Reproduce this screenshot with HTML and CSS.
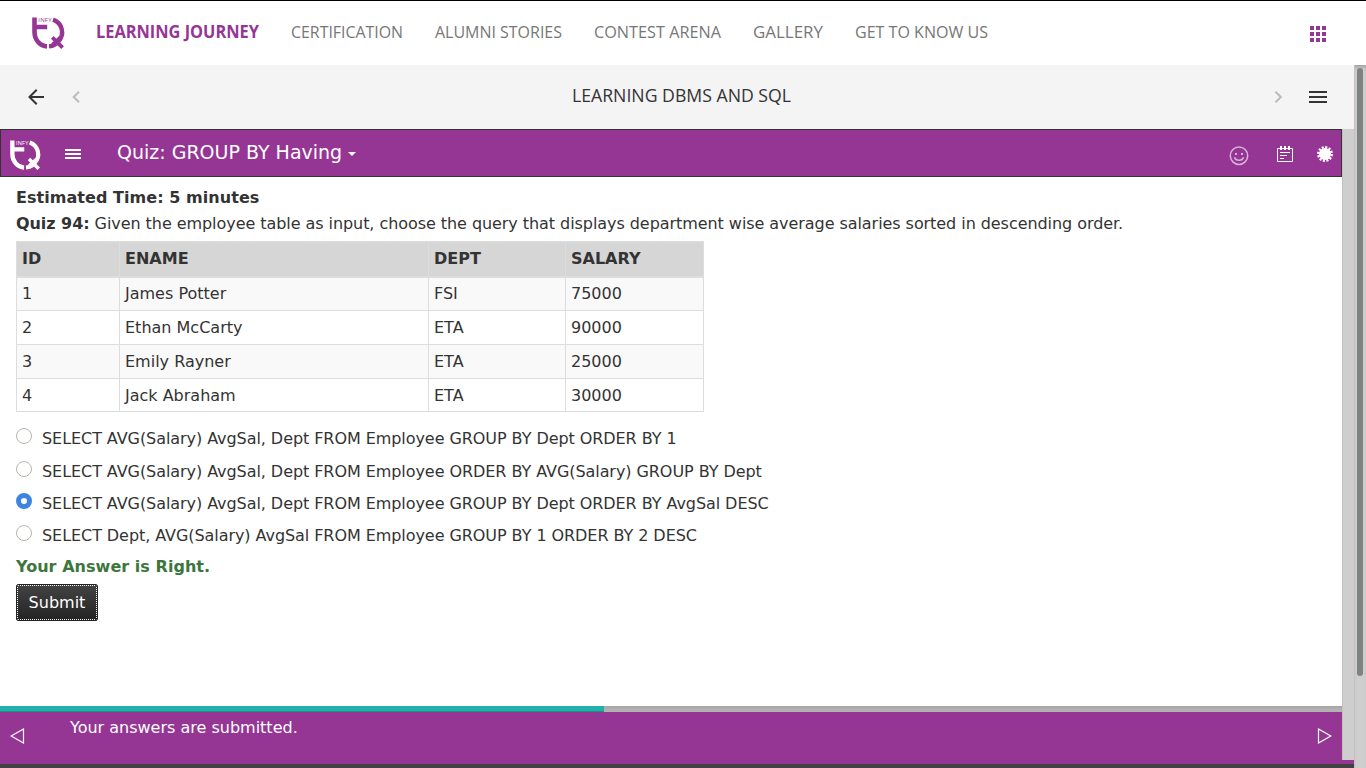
FILE: index.html
```html
<!DOCTYPE html>
<html lang="en">
<head>
<meta charset="utf-8">
<title>Learning DBMS and SQL</title>
<link rel="stylesheet" href="styles.css">
</head>
<body>
<header class="site-header">
  <svg class="logo" width="32" height="32" viewBox="0 0 32 32">
    <path d="M2.5 .5V15A13 14.4 0 0 0 15 29.4M2 10H15.2" fill="none" stroke="currentColor" stroke-width="4.6"/>
    <path d="M21 2.6A13.3 13.3 0 0 1 26.4 24.4M17 29.4C20 29.2 22.2 28.4 24.4 26.8" fill="none" stroke="currentColor" stroke-width="4.4"/>
    <path d="M20.3 20.3L30.6 30.6M20.6 27.6L28.2 20.6" fill="none" stroke="currentColor" stroke-width="3.8"/>
    <text class="logo-text" x="6.3" y="5.2" textLength="13.2">INFY</text>
  </svg>
  <nav class="nav">
    <svg class="link active" width="163" height="24"><text x="0" y="18" textLength="163" lengthAdjust="spacingAndGlyphs">LEARNING JOURNEY</text></svg>
    <svg class="link" width="112" height="24"><text x="0" y="18" textLength="112" lengthAdjust="spacingAndGlyphs">CERTIFICATION</text></svg>
    <svg class="link" width="127" height="24"><text x="0" y="18" textLength="127" lengthAdjust="spacingAndGlyphs">ALUMNI STORIES</text></svg>
    <svg class="link" width="127" height="24"><text x="0" y="18" textLength="127" lengthAdjust="spacingAndGlyphs">CONTEST ARENA</text></svg>
    <svg class="link" width="70" height="24"><text x="0" y="18" textLength="70" lengthAdjust="spacingAndGlyphs">GALLERY</text></svg>
    <svg class="link" width="133" height="24"><text x="0" y="18" textLength="133" lengthAdjust="spacingAndGlyphs">GET TO KNOW US</text></svg>
  </nav>
  <svg class="apps" width="16" height="16" fill="currentColor"><path d="M0 0h4v4H0zM6 0h4v4H6zM12 0h4v4h-4zM0 6h4v4H0zM6 6h4v4H6zM12 6h4v4h-4zM0 12h4v4H0zM6 12h4v4H6zM12 12h4v4h-4z"/></svg>
</header>
<div class="workspace">
  <main class="main">
    <div class="course-bar">
      <svg class="back" width="16" height="16" fill="none" stroke="#333" stroke-width="2"><path d="M16 8H1.5M8.7 .8L1.5 8L8.7 15.2"/></svg>
      <svg class="prev" width="8" height="12" fill="none" stroke="#bbb" stroke-width="2"><path d="M7 .8L1.7 6L7 11.2"/></svg>
      <svg class="course-title" width="219" height="26"><text x="0" y="19" textLength="219" lengthAdjust="spacingAndGlyphs">LEARNING DBMS AND SQL</text></svg>
      <svg class="next" width="8" height="12" fill="none" stroke="#bbb" stroke-width="2"><path d="M1.5 .8L6.8 6L1.5 11.2"/></svg>
      <svg class="menu" width="18" height="12" fill="#333"><path d="M0 0h18v2H0zM0 5h18v2H0zM0 10h18v2H0z"/></svg>
    </div>
    <div class="frame">
      <section class="player">
        <div class="quiz-bar">
          <svg class="quiz-logo" width="30" height="30" viewBox="0 0 32 32">
            <path d="M2.5 .5V15A13 14.4 0 0 0 15 29.4M2 10H15.2" fill="none" stroke="currentColor" stroke-width="4.6"/>
            <path d="M21 2.6A13.3 13.3 0 0 1 26.4 24.4M17 29.4C20 29.2 22.2 28.4 24.4 26.8" fill="none" stroke="currentColor" stroke-width="4.4"/>
            <path d="M20.3 20.3L30.6 30.6M20.6 27.6L28.2 20.6" fill="none" stroke="currentColor" stroke-width="3.8"/>
            <text class="logo-text" x="6.3" y="5.2" textLength="13.2">INFY</text>
          </svg>
          <svg class="quiz-menu" width="16" height="10" fill="#fff"><path d="M0 0h16v2H0zM0 4h16v2H0zM0 8h16v2H0z"/></svg>
          <span class="quiz-title">Quiz: GROUP BY Having</span>
          <svg class="caret" width="8" height="4" fill="#fff"><path d="M0 0h8L4 4z"/></svg>
          <svg class="smile" width="20" height="20" fill="none" stroke="#d8b4d8" stroke-width="1.5"><circle cx="10" cy="9.7" r="8.7"/><path d="M5.5 11.2C6.5 15.2 13.5 15.2 14.5 11.2"/><path d="M6 8h2M12 8h2" stroke-width="2"/></svg>
          <svg class="notes" width="16" height="16" fill="none" stroke="#fff"><path d="M.5 2.5h15v13H.5zM3 6.5h10M3 9.5h7M3 12.5h4"/><path d="M4 0v4M8 0v4M12 0v4" stroke-width="2"/></svg>
          <svg class="badge" width="16" height="16" viewBox="-8 -8 16 16"><circle r="6" fill="#fff"/><circle r="6.8" fill="none" stroke="#fff" stroke-width="2.4" stroke-dasharray="2.1 1.46"/></svg>
        </div>
        <div class="content">
          <p class="time">Estimated Time: 5 minutes</p>
          <p class="question"><b>Quiz 94:</b> Given the employee table as input, choose the query that displays department wise average salaries sorted in descending order.</p>
          <table class="data">
            <colgroup><col class="c-id"><col class="c-name"><col class="c-dept"><col class="c-salary"></colgroup>
            <thead><tr><th>ID</th><th>ENAME</th><th>DEPT</th><th>SALARY</th></tr></thead>
            <tbody>
              <tr><td>1</td><td>James Potter</td><td>FSI</td><td>75000</td></tr>
              <tr><td>2</td><td>Ethan McCarty</td><td>ETA</td><td>90000</td></tr>
              <tr><td>3</td><td>Emily Rayner</td><td>ETA</td><td>25000</td></tr>
              <tr class="last"><td>4</td><td>Jack Abraham</td><td>ETA</td><td>30000</td></tr>
            </tbody>
          </table>
          <div class="options">
            <label class="option first"><span class="radio"></span>SELECT AVG(Salary) AvgSal, Dept FROM Employee GROUP BY Dept ORDER BY 1</label>
            <label class="option"><span class="radio"></span>SELECT AVG(Salary) AvgSal, Dept FROM Employee ORDER BY AVG(Salary) GROUP BY Dept</label>
            <label class="option"><span class="radio checked"></span>SELECT AVG(Salary) AvgSal, Dept FROM Employee GROUP BY Dept ORDER BY AvgSal DESC</label>
            <label class="option"><span class="radio"></span>SELECT Dept, AVG(Salary) AvgSal FROM Employee GROUP BY 1 ORDER BY 2 DESC</label>
          </div>
          <p class="result">Your Answer is Right.</p>
          <button class="submit"><span class="submit-label">Submit</span></button>
        </div>
        <div class="progress"><div class="progress-fill"></div></div>
        <footer class="status">
          <svg width="15" height="16" fill="none" stroke="#fff" stroke-width="1.2"><path d="M13.5 1V15L1.2 8z"/></svg>
          <span class="status-text">Your answers are submitted.</span>
          <svg width="15" height="16" fill="none" stroke="#fff" stroke-width="1.2"><path d="M1.5 1V15L13.8 8z"/></svg>
        </footer>
      </section>
      <div class="inner-track"></div>
    </div>
    <div class="bottom-edge"></div>
  </main>
  <div class="scroll-track"><div class="scroll-thumb"></div></div>
</div>
</body>
</html>
```

FILE: styles.css
```css
* { box-sizing: border-box; }
body { margin: 0; width: 1366px; height: 768px; overflow: hidden; background: #fff; color: #333; font: 16px/26px "DejaVu Sans", sans-serif; }
p { margin: 0; }
svg { display: block; flex: none; }
.logo-text { font: 6px "Open Sans", sans-serif; fill: currentColor; }

.site-header { height: 65px; border-top: 1px solid #000; display: flex; align-items: flex-start; padding: 0 40px 0 32px; color: #963694; }
.logo { margin-top: 16px; overflow: visible; }
.nav { display: flex; gap: 32px; margin: 19px 0 0 32px; }
.link { overflow: visible; font: 16.5px "Open Sans", sans-serif; fill: #777; }
.link.active { font-weight: 700; font-size: 17px; fill: #963694; }
.apps { margin: 25px 0 0 auto; }

.workspace { display: flex; height: 703px; }
.main { width: 1354px; display: flex; flex-direction: column; }
.course-bar { height: 64px; background: #f4f4f4; display: flex; align-items: center; padding: 0 27px 0 28px; }
.prev { margin-left: 28px; }
.course-title { margin: -3px 0 0 492px; overflow: visible; font: 18.5px "Open Sans", sans-serif; fill: #333; }
.next { margin-left: auto; }
.menu { margin-left: 27px; }

.frame { height: 635px; display: flex; background: #963694; }
.player { width: 1342px; display: flex; flex-direction: column; background: #fff; }
.inner-track { width: 12px; height: 631px; background: #cecece; border-left: 1px solid #c6c1bb; }
.quiz-bar { height: 48px; background: #963694; border: 1px solid #333; color: #fff; display: flex; align-items: flex-start; padding: 0 8px 0 9px; }
.quiz-logo { margin-top: 10px; overflow: visible; }
.quiz-menu { margin: 19px 0 0 25px; }
.quiz-title { font-size: 19px; line-height: 24px; margin: 10px 0 0 36px; }
.caret { margin: 22px 0 0 6px; }
.smile { margin: 16px 0 0 auto; }
.notes { margin: 16px 0 0 28px; }
.badge { margin: 16px 0 0 24px; }

.content { height: 529px; padding: 8px 16px; }
.time { font-weight: bold; letter-spacing: .05px; }
.question { letter-spacing: -.06px; }
.data { table-layout: fixed; border-collapse: collapse; width: 688px; margin-top: 4px; line-height: 24px; }
.c-id { width: 103px; }
.c-name { width: 309px; }
.c-dept { width: 137px; }
.c-salary { width: 138px; }
.data th, .data td { border: 1px solid #ddd; padding: 0 5px; height: 34px; text-align: left; vertical-align: middle; }
.data th { background: #d6d6d6; border-bottom-width: 2px; height: 35px; }
.data tbody tr:nth-child(odd) { background: #f9f9f9; }
.data .last td { height: 33px; padding-top: 2px; }
.options { margin-top: 10px; }
.option { display: flex; height: 32px; line-height: 34px; white-space: nowrap; letter-spacing: -.065px; }
.option.first { height: 33px; }
.radio { width: 16px; height: 16px; margin: 6px 10px 0 0; border: 1px solid #b9b4ae; border-radius: 50%; background: #fff; flex: none; }
.radio.checked { border: 5px solid #3c84e0; }
.result { color: #3c763d; font-weight: bold; margin-top: 3px; letter-spacing: .04px; }
.submit { display: block; width: 82px; height: 37px; margin: 4px 0 0; padding: 1px; border: 0; border-radius: 3px; background: linear-gradient(#444, #222); outline: 1px solid #222; outline-offset: -1px; color: #fff; font: 16px "DejaVu Sans", sans-serif; }
.submit-label { display: flex; align-items: center; justify-content: center; height: 35px; border: 1px dotted #fff; border-radius: 1px; }

.progress { height: 6px; background: linear-gradient(#a5a5a5, #b3b3b3 4px); }
.progress-fill { width: 604px; height: 6px; background: #20b2aa; border-bottom: 1px solid #1a918b; }
.status { height: 52px; background: #963694; color: #fff; display: flex; align-items: flex-start; padding: 16px 10px 0 10px; }
.status-text { flex: 1; margin: -13px 0 0 45px; }
.bottom-edge { height: 4px; background: #424242; }
.scroll-track { width: 12px; background: #cecece; border-left: 1px solid #c6c1bb; padding: 3px 2px; box-shadow: inset 0 5px 5px -4px #888; }
.scroll-thumb { width: 6px; height: 608px; border-radius: 3px; background: #7f8282; }
```
